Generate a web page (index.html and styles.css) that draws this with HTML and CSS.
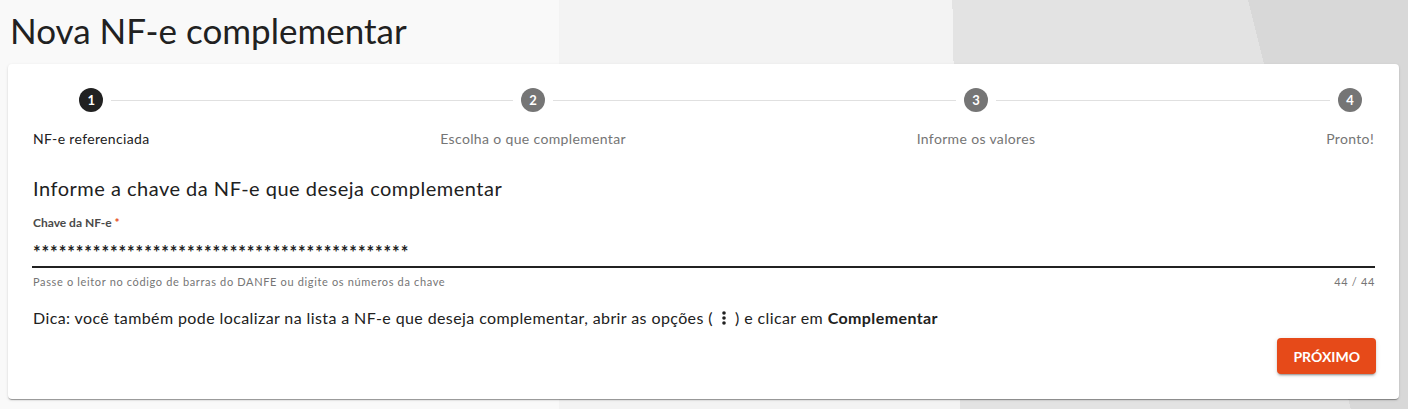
FILE: index.html
```html
<!DOCTYPE html>
<html lang="pt-BR">
<head>
<meta charset="utf-8">
<title>Nova NF-e complementar</title>
<link rel="stylesheet" href="styles.css">
</head>
<body>
<div class="page">
  <h1 class="title">Nova NF-e complementar</h1>
  <section class="card">
    <div class="stepper">
      <div class="step step-first active">
        <div class="step-head"><span class="line"></span><span class="num">1</span><span class="line"></span></div>
        <div class="step-label">NF-e referenciada</div>
      </div>
      <div class="connector"></div>
      <div class="step">
        <div class="step-head"><span class="line"></span><span class="num">2</span><span class="line"></span></div>
        <div class="step-label">Escolha o que complementar</div>
      </div>
      <div class="connector"></div>
      <div class="step">
        <div class="step-head"><span class="line"></span><span class="num">3</span><span class="line"></span></div>
        <div class="step-label">Informe os valores</div>
      </div>
      <div class="connector"></div>
      <div class="step step-last">
        <div class="step-head"><span class="line"></span><span class="num">4</span><span class="line"></span></div>
        <div class="step-label">Pronto!</div>
      </div>
    </div>

    <h2 class="heading">Informe a chave da NF-e que deseja complementar</h2>

    <div class="field">
      <div class="field-label">Chave da NF-e <span class="req">*</span></div>
      <div class="field-value">********************************************</div>
      <div class="field-underline"></div>
      <div class="field-hints">
        <span>Passe o leitor no código de barras do DANFE ou digite os números da chave</span>
        <span>44 / 44</span>
      </div>
    </div>

    <p class="tip">Dica: você também pode localizar na lista a NF-e que deseja complementar, abrir as opções (<svg class="dots" width="16" height="16" viewBox="0 0 16 16" aria-hidden="true"><circle cx="8" cy="3" r="1.8"/><circle cx="8" cy="8" r="1.8"/><circle cx="8" cy="13" r="1.8"/></svg>) e clicar em <strong>Complementar</strong></p>

    <div class="actions">
      <button class="btn-primary" type="button">PRÓXIMO</button>
    </div>
  </section>
</div>
</body>
</html>
```

FILE: styles.css
```css
* { box-sizing: border-box; }

html, body {
  margin: 0;
  padding: 0;
}

body {
  font-family: "Lato", "Noto Sans", sans-serif;
  color: #212121;
}

.page {
  min-height: 100vh;
  padding: 0 9px 10px 8px;
  background:
    linear-gradient(75.9deg, transparent 1310px, #d8d8d8 1310px),
    linear-gradient(88.9deg, transparent 960px, #e3e3e3 960px),
    linear-gradient(90deg, #f9f9f9 559px, #f3f3f3 559px);
}

.title {
  margin: 0;
  padding: 10px 0 0 2px;
  height: 64px;
  font-size: 35px;
  line-height: 40px;
  font-weight: 400;
  color: #212121;
}

.card {
  background: #fff;
  border-radius: 4px;
  box-shadow: 0 2px 1px -1px rgba(0,0,0,.25), 0 1px 1px 0 rgba(0,0,0,.14), 0 1px 3px 0 rgba(0,0,0,.12);
  padding: 24px;
  height: 335px;
}

/* Stepper */
.stepper {
  display: flex;
  align-items: flex-start;
  padding: 0 1px 0 1px;
}

.step {
  display: flex;
  flex-direction: column;
  align-items: center;
}

.step-head {
  align-self: stretch;
  display: flex;
  align-items: center;
  height: 24px;
}

.step-head .line {
  flex: 1;
  height: 1px;
  background: #e0e0e0;
}

.step-head .num {
  width: 24px;
  height: 24px;
  border-radius: 50%;
  background: #757575;
  color: #fff;
  font-size: 13px;
  font-weight: 700;
  display: flex;
  align-items: center;
  justify-content: center;
  margin: 0 8px;
  flex: none;
}

.step.active .num { background: #212121; }

.step-first .step-head .line:first-child,
.step-last .step-head .line:last-child { visibility: hidden; }

.connector {
  flex: 1;
  height: 1px;
  background: #e0e0e0;
  margin-top: 12px;
}

.step-label {
  margin-top: 19px;
  font-size: 14px;
  line-height: 16px;
  letter-spacing: 0.35px;
  color: #757575;
  white-space: nowrap;
}

.step.active .step-label { color: #212121; }

/* Heading */
.heading {
  margin: 29px 0 0 1px;
  font-size: 20px;
  line-height: 24px;
  font-weight: 400;
  letter-spacing: 0.5px;
  color: #212121;
}

/* Field */
.field {
  margin-top: 15px;
  padding-left: 1px;
}

.field-label {
  font-size: 12px;
  line-height: 16px;
  font-weight: 700;
  color: #4a4a4a;
}

.req { color: #e64a19; }

.field-value {
  margin-top: 6px;
  font-size: 18px;
  line-height: 22px;
  font-weight: 700;
  color: #212121;
  letter-spacing: 0.9px;
  height: 24px;
  padding-top: 4px;
}

.field-underline {
  margin-top: 5px;
  margin-left: -1px;
  height: 2px;
  background: #212121;
}

.field-hints {
  display: flex;
  justify-content: space-between;
  margin-top: 7px;
  font-size: 11px;
  line-height: 14px;
  letter-spacing: 0.65px;
  color: #757575;
}

/* Tip */
.tip {
  margin: 19px 0 0 1px;
  font-size: 16px;
  line-height: 20px;
  letter-spacing: 0.4px;
  color: #212121;
  display: flex;
  align-items: center;
  white-space: pre;
}

.tip .dots {
  fill: #212121;
  margin: 0 3px;
}

.tip strong { font-weight: 700; }

/* Actions */
.actions {
  display: flex;
  justify-content: flex-end;
  margin-top: 10px;
}

.btn-primary {
  font-family: inherit;
  font-size: 14px;
  font-weight: 700;
  color: #fff;
  background: #e64a19;
  border: 0;
  border-radius: 4px;
  height: 36px;
  padding: 0 16px;
  min-width: 97px;
  box-shadow: 0 3px 1px -2px rgba(0,0,0,.2), 0 2px 2px 0 rgba(0,0,0,.14), 0 1px 5px 0 rgba(0,0,0,.12);
  margin-right: -1px;
}
```
